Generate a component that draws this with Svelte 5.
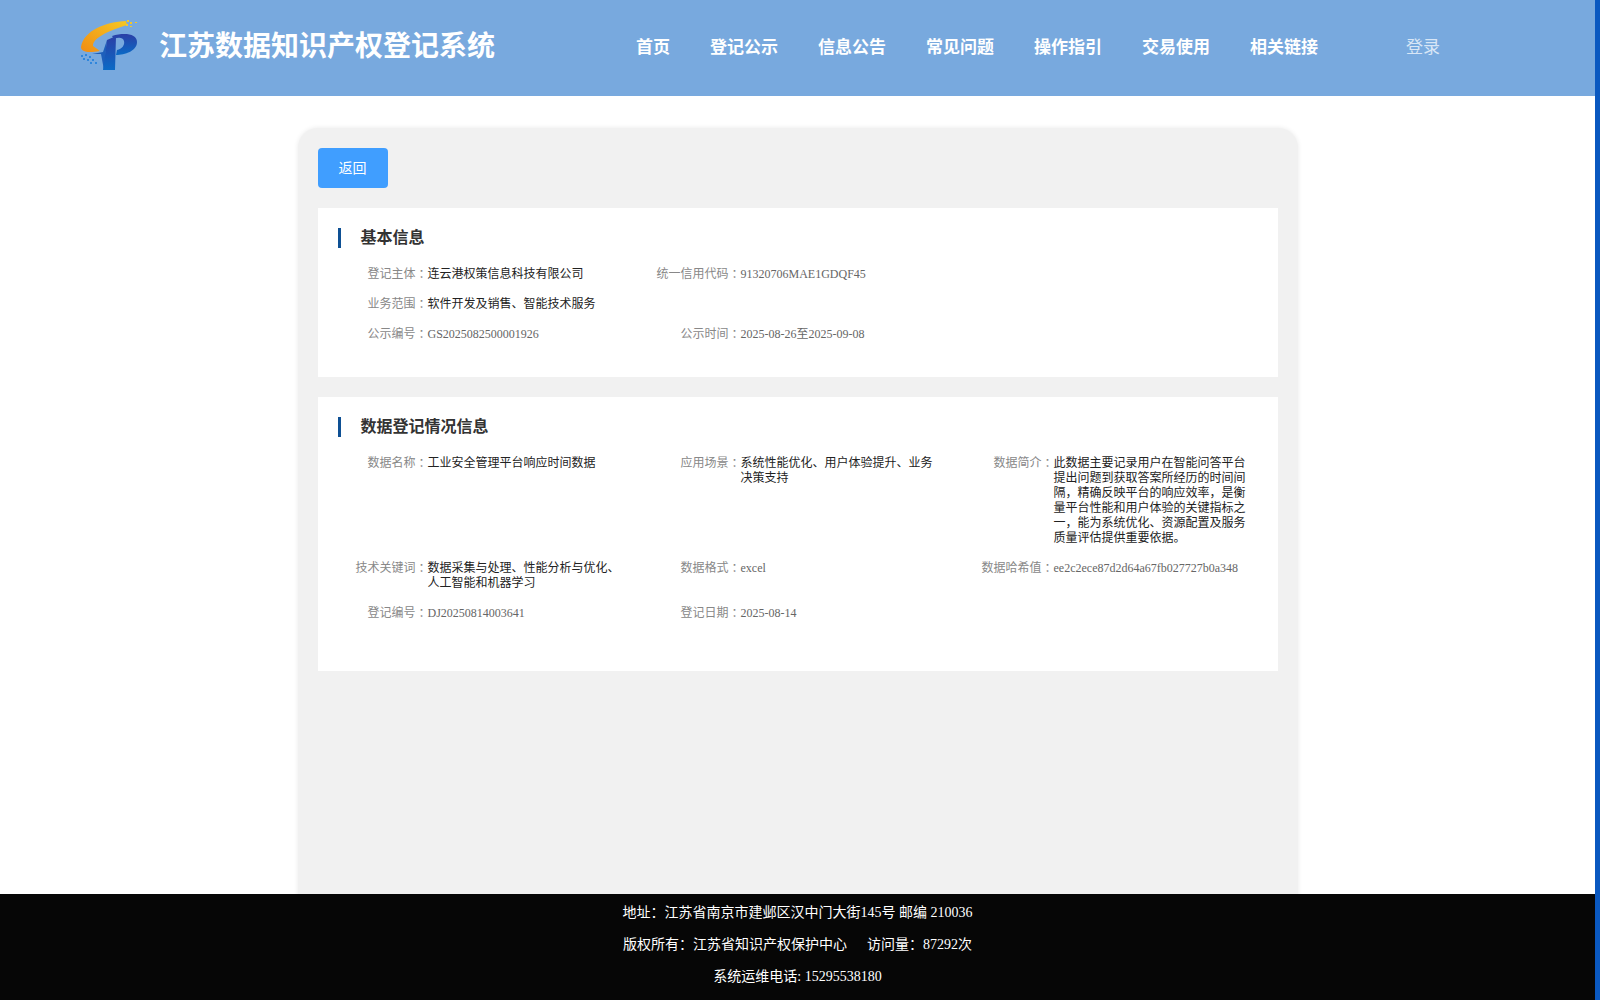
<script>
  const nav = ['首页', '登记公示', '信息公告', '常见问题', '操作指引', '交易使用', '相关链接'];

  const basicRows = [
    [
      { label: '登记主体', value: '连云港权策信息科技有限公司', dark: true },
      { label: '统一信用代码', value: '91320706MAE1GDQF45' }
    ],
    [{ label: '业务范围', value: '软件开发及销售、智能技术服务', dark: true }],
    [
      { label: '公示编号', value: 'GS2025082500001926' },
      { label: '公示时间', value: '2025-08-26至2025-09-08' }
    ]
  ];

  const dataRows = [
    [
      { label: '数据名称', value: '工业安全管理平台响应时间数据', dark: true },
      { label: '应用场景', value: '系统性能优化、用户体验提升、业务决策支持', dark: true },
      {
        label: '数据简介',
        value:
          '此数据主要记录用户在智能问答平台提出问题到获取答案所经历的时间间隔，精确反映平台的响应效率，是衡量平台性能和用户体验的关键指标之一，能为系统优化、资源配置及服务质量评估提供重要依据。',
        dark: true
      }
    ],
    [
      { label: '技术关键词', value: '数据采集与处理、性能分析与优化、人工智能和机器学习', dark: true },
      { label: '数据格式', value: 'excel' },
      { label: '数据哈希值', value: 'ee2c2ece87d2d64a67fb027727b0a348' }
    ],
    [
      { label: '登记编号', value: 'DJ20250814003641' },
      { label: '登记日期', value: '2025-08-14' }
    ]
  ];
</script>

<div class="page">
  <header class="topbar">
    <div class="brand">
      <svg class="logo" viewBox="0 0 80 70" aria-hidden="true">
        <defs>
          <linearGradient id="swoosh" x1="0" y1="1" x2="1" y2="0">
            <stop offset="0" stop-color="#f08c14" />
            <stop offset="1" stop-color="#f6c823" />
          </linearGradient>
          <linearGradient id="letter" x1="0" y1="0" x2="0" y2="1">
            <stop offset="0" stop-color="#2b3fa6" />
            <stop offset="1" stop-color="#0a6ac6" />
          </linearGradient>
        </defs>
        <path d="M56 11C36 12 14 20 11 37C11 42 18 43 30 41L23 36C23 28 36 22 57 15Z" fill="url(#swoosh)" />
        <path d="M22 44L33 42L37 30L34 60L31 44Z" fill="#1d5fbb" />
        <path d="M37 30L46 26L45 60L33 60Z" fill="url(#letter)" />
        <path d="M42 26C55 22 67 24 67 32C67 41 55 45 46 45L47 40C52 39 55 35 54 31C53 27 48 27 44 29Z" fill="url(#letter)" />
        <g fill="#f6c823">
          <rect x="57" y="10" width="2" height="2" /><rect x="60" y="12" width="2" height="2" />
          <rect x="65" y="12" width="2" height="1" /><rect x="56" y="14" width="2" height="2" />
          <rect x="60" y="16" width="2" height="1" />
        </g>
        <g fill="#2f86dc">
          <rect x="11" y="45" width="2" height="2" /><rect x="15" y="44" width="2" height="2" />
          <rect x="19" y="46" width="2" height="2" /><rect x="13" y="48" width="2" height="2" />
          <rect x="17" y="49" width="2" height="2" /><rect x="22" y="49" width="2" height="2" />
          <rect x="20" y="52" width="2" height="2" /><rect x="25" y="52" width="2" height="2" />
        </g>
      </svg>
      <span class="site-name">江苏数据知识产权登记系统</span>
    </div>
    <nav class="menu">
      {#each nav as item}
        <span class="menu-item">{item}</span>
      {/each}
    </nav>
    <span class="login">登录</span>
  </header>

  <main class="content">
    <div class="card">
      <button class="back" type="button">返回</button>

      <section class="panel basic">
        <h2 class="panel-title">基本信息</h2>
        {#each basicRows as row}
          <div class="row">
            {#each row as f}
              <div class="field">
                <span class="label">{f.label}<span class="colon">：</span></span>
                <span class="value" class:dark={f.dark}>{f.value}</span>
              </div>
            {/each}
          </div>
        {/each}
      </section>

      <section class="panel data">
        <h2 class="panel-title">数据登记情况信息</h2>
        {#each dataRows as row}
          <div class="row">
            {#each row as f}
              <div class="field">
                <span class="label">{f.label}<span class="colon">：</span></span>
                <span class="value" class:dark={f.dark}>{f.value}</span>
              </div>
            {/each}
          </div>
        {/each}
      </section>
    </div>
  </main>

  <footer class="footer">
    <p>地址：江苏省南京市建邺区汉中门大街145号 邮编 210036</p>
    <p>版权所有：江苏省知识产权保护中心<span class="visits">访问量：87292次</span></p>
    <p>系统运维电话: 15295538180</p>
  </footer>

  <div class="scrollbar"></div>
</div>

<style>
  :global(body) {
    margin: 0;
    overflow: hidden;
    background: #fff;
  }

  .page {
    position: relative;
    width: 1595px;
    height: 1000px;
    overflow: hidden;
    display: flex;
    flex-direction: column;
    font-family: 'Liberation Serif', 'Noto Sans CJK SC', serif;
    font-size: 12px;
  }

  .scrollbar {
    position: fixed;
    top: 0;
    right: 0;
    width: 5px;
    height: 1000px;
    background: #0a58c0;
  }

  .topbar {
    flex: none;
    height: 96px;
    box-sizing: border-box;
    padding-bottom: 6px;
    background: #78a9de;
    display: flex;
    align-items: center;
    color: #fff;
  }

  .brand {
    width: 636px;
    padding-left: 70px;
    box-sizing: border-box;
    display: flex;
    align-items: center;
    gap: 9px;
  }

  .logo {
    width: 80px;
    height: 70px;
    flex: none;
  }

  .site-name {
    margin-bottom: 2px;
    font-size: 28px;
    font-weight: 700;
    white-space: nowrap;
  }

  .menu {
    width: 770px;
    display: flex;
    gap: 40px;
    font-size: 17px;
    font-weight: 700;
  }

  .menu-item {
    white-space: nowrap;
  }

  .login {
    font-size: 17px;
    color: #d8e6f6;
  }

  .content {
    flex: 1;
    min-height: 0;
    padding-top: 32px;
    display: flex;
    justify-content: center;
  }

  .card {
    width: 1000px;
    height: 900px;
    box-sizing: border-box;
    padding: 20px;
    background: #f1f1f1;
    border-radius: 20px;
    box-shadow: 0 0 5px rgba(0, 0, 0, 0.09);
  }

  .back {
    display: block;
    width: 70px;
    height: 40px;
    padding: 0 0 2px;
    border: none;
    border-radius: 4px;
    background: #409eff;
    color: #fff;
    font-family: inherit;
    font-size: 14px;
  }

  .panel {
    background: #fff;
    margin-top: 20px;
    padding: 20px;
    box-sizing: border-box;
  }

  .panel.basic {
    height: 169px;
  }

  .panel.data {
    height: 274px;
  }

  .panel-title {
    margin: 0 0 19px;
    height: 20px;
    line-height: 20px;
    padding-left: 20px;
    border-left: 3px solid #0e5094;
    font-size: 16px;
    font-weight: 700;
    color: #333;
  }

  .row {
    display: grid;
    grid-template-columns: 313px 313px 294px;
    line-height: 15px;
    margin-bottom: 15px;
  }

  .field {
    display: flex;
  }

  .label {
    flex: none;
    width: 90px;
    text-align: right;
    color: #888;
  }

  .colon {
    font-family: 'Noto Sans CJK TC', sans-serif;
    line-height: 0;
    vertical-align: -1px;
  }

  .value {
    width: 193px;
    color: #666;
    word-break: break-all;
  }

  .value.dark {
    color: #222;
  }

  .footer {
    position: absolute;
    left: 0;
    right: 0;
    bottom: 0;
    height: 106px;
    box-sizing: border-box;
    padding-top: 3px;
    background: #060606;
    color: #fff;
    text-align: center;
    font-size: 14px;
  }

  .footer p {
    margin: 0;
    height: 32px;
    line-height: 32px;
  }

  .visits {
    margin-left: 20px;
  }
</style>
